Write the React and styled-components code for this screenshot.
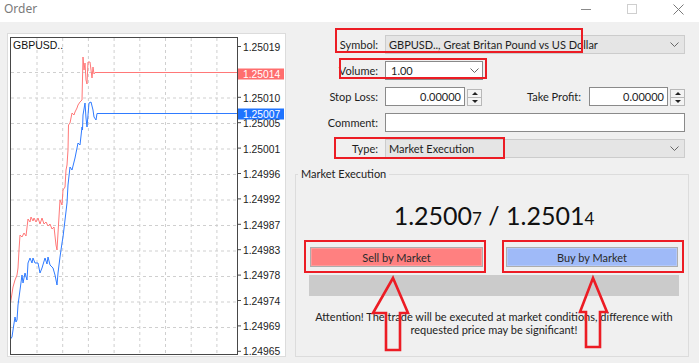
import React from "react";
import styled, { createGlobalStyle } from "styled-components";

const GlobalStyle = createGlobalStyle`
  html, body {
    margin: 0;
    padding: 0;
    background: #f0f0f0;
  }
  body {
    font-family: Lato, "Noto Sans", sans-serif;
    font-size: 11px;
    color: #1e1e1e;
  }
`;

const Window = styled.div`
  position: relative;
  width: 699px;
  height: 363px;
  overflow: hidden;
  background: #f0f0f0;
  display: flex;
  flex-direction: column;
`;

const TitleBar = styled.div`
  height: 22px;
  flex: none;
  background: #fff;
  display: flex;
  align-items: flex-start;
  justify-content: space-between;
  padding-left: 4px;
`;

const Title = styled.span`
  font-family: "Noto Sans", sans-serif;
  font-size: 12px;
  line-height: 18px;
  color: #7a7a7a;
`;

const Controls = styled.div`
  display: flex;
  align-items: flex-start;
  gap: 36px;
  margin-right: 15px;
  padding-top: 4px;
`;

const Body = styled.div`
  flex: 1;
  display: flex;
  gap: 9px;
  padding: 11px 10px 6px 7px;
  min-height: 0;
`;

const ChartPanel = styled.div`
  width: 279px;
  flex: none;
  box-sizing: border-box;
  background: #fff;
  border: 1px solid #dcdcdc;
  svg {
    display: block;
  }
`;

const RightColumn = styled.div`
  flex: 1;
  display: flex;
  flex-direction: column;
`;

const Form = styled.div`
  display: flex;
  flex-direction: column;
  gap: 7px;
  margin-top: 2px;
  padding-right: 4px;
`;

const Row = styled.div`
  display: flex;
  align-items: center;
  height: 19px;
`;

const Label = styled.div`
  width: ${(p) => p.$width || 90}px;
  flex: ${(p) => (p.$grow ? 1 : "none")};
  box-sizing: border-box;
  padding-right: ${(p) => p.$pad || 7}px;
  text-align: right;
  white-space: nowrap;
`;

const Combo = styled.div`
  height: 19px;
  box-sizing: border-box;
  width: ${(p) => (p.$width ? `${p.$width}px` : "auto")};
  flex: ${(p) => (p.$width ? "none" : 1)};
  border: 1px solid ${(p) => (p.$disabled ? "#cccccc" : "#8a8a8a")};
  background: ${(p) => (p.$disabled ? "#e5e5e5" : "#fff")};
  display: flex;
  align-items: center;
  justify-content: space-between;
  padding: 0 ${(p) => p.$padRight || 5}px 0 ${(p) => p.$padLeft || 3}px;
  white-space: nowrap;
`;

const Input = styled.div`
  height: 19px;
  box-sizing: border-box;
  width: ${(p) => (p.$width ? `${p.$width}px` : "auto")};
  flex: ${(p) => (p.$width ? "none" : 1)};
  border: 1px solid #8a8a8a;
  background: #fff;
  display: flex;
  align-items: center;
  justify-content: flex-end;
  padding-right: 3px;
`;

const SpinField = styled.div`
  display: flex;
  align-items: center;
  gap: 2px;
`;

const Spinner = styled.div`
  width: 15px;
  height: 17px;
  box-sizing: border-box;
  border: 1px solid #b8b8b8;
  background: #f4f4f4;
  display: flex;
  flex-direction: column;
  margin-top: 1px;
`;

const SpinHalf = styled.div`
  flex: 1;
  display: flex;
  align-items: center;
  justify-content: center;
  & + & {
    border-top: 1px solid #b8b8b8;
  }
  &::before {
    content: "";
    width: 0;
    height: 0;
    border-left: 3px solid transparent;
    border-right: 3px solid transparent;
    ${(p) =>
      p.$down
        ? "border-top: 3px solid #222;"
        : "border-bottom: 3px solid #222;"}
  }
`;

const Group = styled.fieldset`
  flex: 1;
  margin: 9px 0 0;
  padding: 0;
  border: 1px solid #dcdcdc;
  display: flex;
  flex-direction: column;
  min-width: 0;
`;

const Legend = styled.legend`
  margin-left: 2px;
  padding: 0 3px;
  line-height: 14px;
  color: #222;
`;

const GroupInner = styled.div`
  display: flex;
  flex-direction: column;
  width: 370px;
  margin-left: 13px;
`;

const Price = styled.div`
  margin-top: 19px;
  height: 30px;
  line-height: 30px;
  text-align: center;
  font-size: 25px;
  color: #111;
`;

const Small = styled.span`
  font-size: 17px;
`;

const ButtonRow = styled.div`
  display: flex;
  justify-content: space-between;
  padding: 0 1px;
  margin-top: 17px;
`;

const MarketButton = styled.div`
  width: ${(p) => p.$width}px;
  height: 20px;
  box-sizing: border-box;
  border: 1px solid #adadad;
  background: ${(p) => (p.$buy ? "#9fbaf8" : "#ff8080")};
  box-shadow: inset 0 0 0 1px ${(p) => (p.$buy ? "#b3c8fa" : "#ff9a9a")};
  display: flex;
  align-items: center;
  justify-content: center;
  color: #2a2a2a;
`;

const ProgressBar = styled.div`
  height: 21px;
  margin-top: 8px;
  background: #cbcbcb;
`;

const Attention = styled.div`
  margin-top: 14px;
  line-height: 13px;
  text-align: center;
  color: #222;
`;

const Highlight = styled.div`
  position: absolute;
  left: ${(p) => p.$x}px;
  top: ${(p) => p.$y}px;
  width: ${(p) => p.$w}px;
  height: ${(p) => p.$h}px;
  box-sizing: border-box;
  border: 2px solid #ec1c24;
  pointer-events: none;
`;

const Overlay = styled.svg`
  position: absolute;
  left: 0;
  top: 0;
  pointer-events: none;
`;

const Chevron = () => (
  <svg width="9" height="5" viewBox="0 0 9 5">
    <polyline points="0.5,0.5 4.5,4.5 8.5,0.5" fill="none" stroke="#666" strokeWidth="1" />
  </svg>
);

const red = [
  [10.5, 303], [13, 287], [15, 280], [17, 275], [18, 268], [19, 250], [20, 235], [22, 237],
  [24, 233], [26, 236], [28, 219], [30, 222], [31, 217], [33, 221], [34, 218], [36, 222],
  [38, 218], [40, 224], [42, 218], [44, 224], [46, 222], [48, 226], [50, 224], [52, 229],
  [54, 227], [55, 236], [56, 245], [57, 250], [58, 233], [60, 200], [62, 205], [63, 190],
  [65, 187], [66, 170], [67, 165], [68, 150], [68.5, 125], [70, 123], [72, 113], [74, 115],
  [75, 112], [77, 108], [78, 105], [80, 102], [82, 100], [83, 57], [84, 70], [85, 63],
  [86, 80], [87, 84], [88, 62], [90, 62], [91, 70], [92, 78], [93, 67], [94, 74],
  [95, 72.5], [237, 72.5],
];

const blue = [
  [10.5, 339], [12, 337], [13, 330], [15, 317], [16, 322], [17, 320], [18, 305], [20, 290],
  [22, 275], [23, 283], [25, 273], [27, 280], [28, 263], [30, 258], [32, 263], [33, 258],
  [35, 263], [38, 263], [40, 273], [42, 268], [45, 258], [47, 264], [48, 257], [50, 265],
  [53, 268], [55, 275], [57, 285], [58, 273], [60, 257], [62, 243], [63, 237], [65, 220],
  [67, 203], [68, 185], [70, 167], [72, 170], [73, 166], [75, 158], [77, 148], [78, 143],
  [80, 145], [82, 127], [82.5, 130], [83, 115], [85, 103], [86, 118], [87, 127], [89, 103],
  [91, 102], [93, 110], [94, 117], [96, 120], [97, 113.5], [237, 113.5],
];

const axis = [
  "1.25019", null, "1.25010", "1.25005", "1.25001", "1.24996", "1.24992",
  "1.24987", "1.24983", "1.24978", "1.24974", "1.24969", "1.24965",
];

const pts = (list) => list.map((p) => p.join(",")).join(" ");

const AXIS_FONT = "'Liberation Sans', sans-serif";

const Chart = () => (
  <svg width="277" height="322" viewBox="8 34 277 322">
    {Array.from({ length: 8 }, (_, k) => (
      <line key={"v" + k} x1={37 + k * 25.7} y1="38" x2={37 + k * 25.7} y2="354"
        stroke="#cfcfcf" strokeDasharray="3 3" />
    ))}
    {Array.from({ length: 11 }, (_, k) => (
      <line key={"h" + k} x1="11" y1={72.5 + k * 25.5} x2="237" y2={72.5 + k * 25.5}
        stroke="#cfcfcf" strokeDasharray="3 3" />
    ))}
    <polyline points={pts(red)} fill="none" stroke="#ff7878" strokeWidth="1" />
    <polyline points={pts(blue)} fill="none" stroke="#2f7bff" strokeWidth="1" />
    <rect x="10.5" y="37.5" width="227" height="317" fill="none" stroke="#474747" />
    {axis.map((v, k) => (
      <g key={"a" + k}>
        <line x1="237" y1={46.5 + k * 25.4} x2="241" y2={46.5 + k * 25.4} stroke="#474747" />
        {v && (
          <text x="243" y={51.3 + k * 25.33} fontSize="10.3" fill="#222"
            fontFamily={AXIS_FONT}>{v}</text>
        )}
      </g>
    ))}
    <rect x="238" y="68.5" width="46" height="11" fill="#ff6e6e" />
    <text x="243" y="77.5" fontSize="10.3" fill="#fff" fontFamily={AXIS_FONT}>1.25014</text>
    <rect x="238" y="108.5" width="46" height="11" fill="#1f74ff" />
    <text x="243" y="117.5" fontSize="10.3" fill="#fff" fontFamily={AXIS_FONT}>1.25007</text>
    <text x="13" y="49" fontSize="10.5" fill="#111" fontFamily={AXIS_FONT}>GBPUSD..</text>
  </svg>
);

const Arrow = ({ tip, head, shaft, bottom }) => {
  const [tx, ty] = tip;
  const [hl, hr, hy] = head;
  const [sl, sr] = shaft;
  const p = [[tx, ty], [hr, hy], [sr, hy], [sr, bottom], [sl, bottom], [sl, hy], [hl, hy]];
  return (
    <polygon points={pts(p)} fill="none" stroke="#ec1c24" strokeWidth="2.6" strokeLinejoin="miter" />
  );
};

export default function App() {
  return (
    <>
      <GlobalStyle />
      <Window>
        <TitleBar>
          <Title>Order</Title>
          <Controls>
            <svg width="10" height="10" viewBox="0 0 10 10">
              <line x1="0" y1="5.5" x2="10" y2="5.5" stroke="#8a8a8a" />
            </svg>
            <svg width="10" height="10" viewBox="0 0 10 10">
              <rect x="0.5" y="0.5" width="9" height="9" fill="none" stroke="#cfcfcf" />
            </svg>
            <svg width="11" height="11" viewBox="0 0 11 11">
              <path d="M0.5 0.5 L10.5 10.5 M10.5 0.5 L0.5 10.5" stroke="#7a7a7a" />
            </svg>
          </Controls>
        </TitleBar>
        <Body>
          <ChartPanel>
            <Chart />
          </ChartPanel>
          <RightColumn>
            <Form>
              <Row>
                <Label>Symbol:</Label>
                <Combo $disabled>
                  <span>GBPUSD.., Great Britan Pound vs US Dollar</span>
                  <Chevron />
                </Combo>
              </Row>
              <Row>
                <Label>Volume:</Label>
                <Combo $width={98} $padLeft={5} $padRight={3}>
                  <span>1.00</span>
                  <Chevron />
                </Combo>
              </Row>
              <Row>
                <Label>Stop Loss:</Label>
                <SpinField>
                  <Input $width={80}>0.00000</Input>
                  <Spinner><SpinHalf /><SpinHalf $down /></Spinner>
                </SpinField>
                <Label $grow $pad={8}>Take Profit:</Label>
                <SpinField>
                  <Input $width={79}>0.00000</Input>
                  <Spinner><SpinHalf /><SpinHalf $down /></Spinner>
                </SpinField>
              </Row>
              <Row>
                <Label>Comment:</Label>
                <Input />
              </Row>
              <Row>
                <Label>Type:</Label>
                <Combo $disabled>
                  <span>Market Execution</span>
                  <Chevron />
                </Combo>
              </Row>
            </Form>
            <Group>
              <Legend>Market Execution</Legend>
              <GroupInner>
                <Price>
                  1.2500<Small>7</Small> / 1.2501<Small>4</Small>
                </Price>
                <ButtonRow>
                  <MarketButton $width={173}>Sell by Market</MarketButton>
                  <MarketButton $width={172} $buy>Buy by Market</MarketButton>
                </ButtonRow>
                <ProgressBar />
                <Attention>
                  Attention! The trade will be executed at market conditions, difference with
                  <br />
                  requested price may be significant!
                </Attention>
              </GroupInner>
            </Group>
          </RightColumn>
        </Body>
        <Highlight $x={335} $y={28} $w={248} $h={25} />
        <Highlight $x={339} $y={58} $w={148} $h={21} />
        <Highlight $x={334} $y={137} $w={171} $h={22} />
        <Highlight $x={304} $y={240} $w={182} $h={33} />
        <Highlight $x={502} $y={240} $w={182} $h={33} />
        <Overlay width="699" height="363" viewBox="0 0 699 363">
          <Arrow tip={[393, 278]} head={[373, 408, 313]} shaft={[386, 400]} bottom={350} />
          <Arrow tip={[593, 278]} head={[580, 607, 312]} shaft={[586, 600]} bottom={347} />
        </Overlay>
      </Window>
    </>
  );
}
